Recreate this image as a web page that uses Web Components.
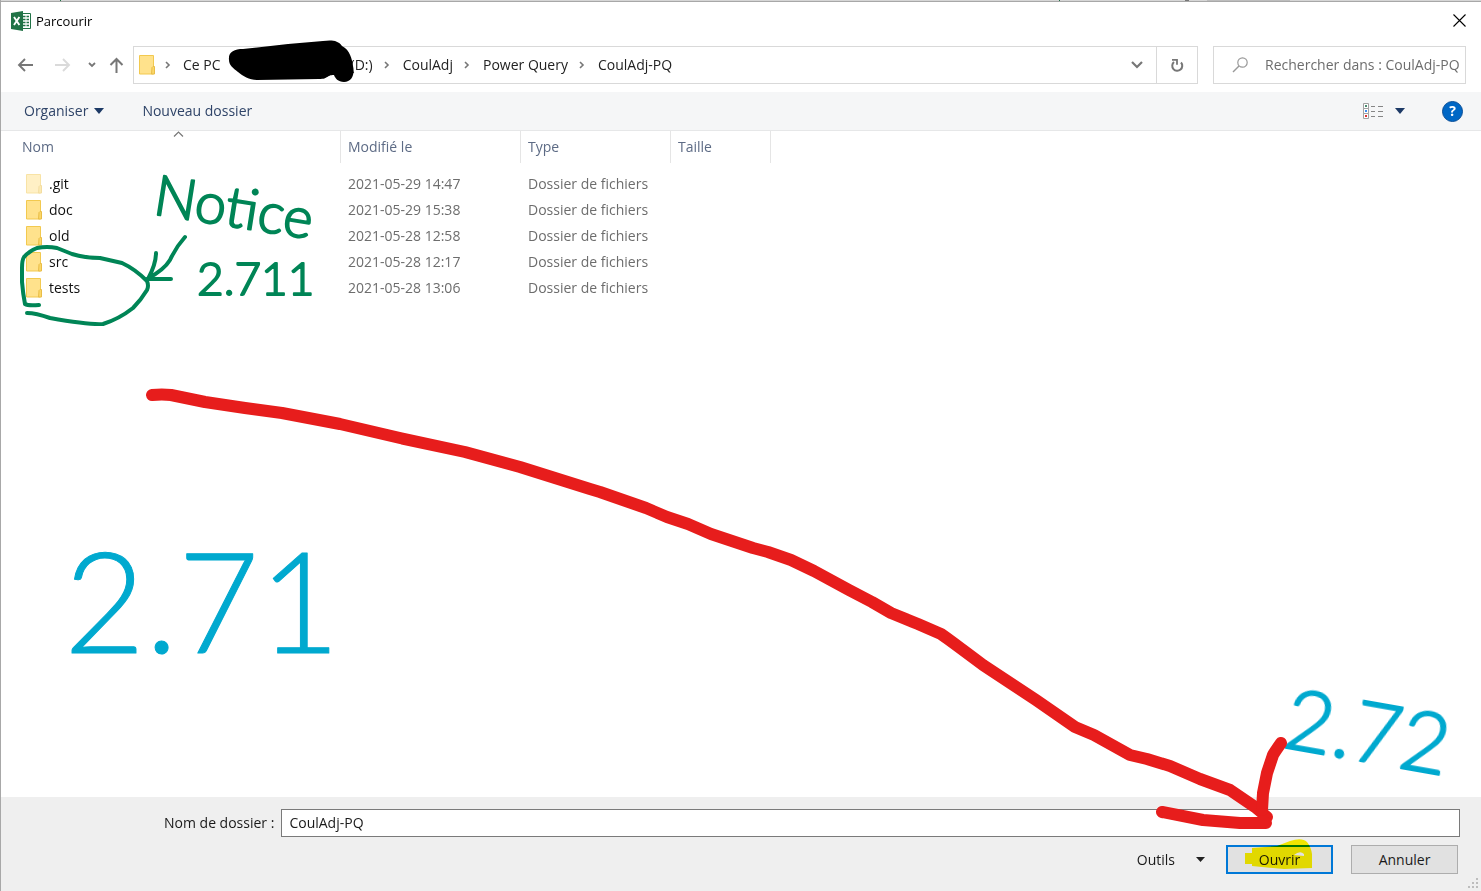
<!DOCTYPE html>
<html lang="fr">
<head>
<meta charset="utf-8">
<title>Parcourir</title>
<style>
  body { margin: 0; background: #fff; color: #1a1a1a; font: 14px/20px "Open Sans", "Noto Sans", sans-serif; }
</style>
</head>
<body>
<file-dialog>
  <title-bar>Parcourir</title-bar>
  <nav-bar></nav-bar>
  <command-bar></command-bar>
  <file-list></file-list>
  <dialog-footer></dialog-footer>
  <ink-layer slot="ink"></ink-layer>
</file-dialog>
<script>
const base = `<style>
  * { box-sizing: border-box; }
  button, input { font: inherit; color: inherit; margin: 0; }
  button { background: none; border: 0; padding: 0; display: flex; align-items: center; }
  svg { display: block; flex: none; }
</style>`;

function define(name, html) {
  customElements.define(name, class extends HTMLElement {
    constructor() {
      super();
      this.attachShadow({ mode: 'open' }).innerHTML = base + html;
    }
  });
}

define('file-dialog', `
<style>
  :host { display: flex; flex-direction: column; min-height: 100vh; position: relative; overflow: hidden; box-sizing: border-box;
    border-left: 1px solid #a8a8a8; background: #fff; }
  .edge { height: 2px; border-bottom: 1px solid #a8a8a8;
    background: linear-gradient(90deg, #d6d6d6 59px, #217346 59px 60px, #d6d6d6 60px 1058px, #217346 1058px 1059px, #d6d6d6 1059px 1184px, #777 1184px 1188px, #d6d6d6 1188px 1206px, #bdbdbd 1206px 1289px, #d6d6d6 1289px); }
</style>
<div class="edge"></div>
<slot></slot>
<slot name="ink"></slot>`);

define('title-bar', `
<style>
  :host { display: flex; align-items: center; gap: 5px; height: 37px; padding: 0 15px 0 10px; font-size: 13px; color: #000; box-sizing: border-box; }
  button { margin-left: auto; }
</style>
<svg width="20" height="20" viewBox="0 0 20 20">
  <path fill="#fff" stroke="#217346" d="M10 2.5h9.500v15H10z"/>
  <path stroke="#217346" stroke-width="1.4" d="M12 5.5h6M12 8.5h6M12 11.5h6M12 14.5h6"/>
  <path stroke="#fff" stroke-width="1" d="M15 4v12"/>
  <path fill="#217346" d="M0 2 12 0v20L0 18z"/>
  <path stroke="#fff" stroke-width="1.9" d="m3 6 5.400 8M8.400 6 3 14"/>
</svg>
<slot></slot>
<button aria-label="Fermer"><svg width="13" height="13" viewBox="0 0 13 13"><path stroke="#000" stroke-width="1.100" d="m.5.5 12 12m0-12-12 12"/></svg></button>`);

define('folder-icon', `
<style>
  :host { display: block; }
  :host([faded]) { opacity: .5; }
</style>
<svg width="17" height="20" viewBox="0 0 17 20">
  <path fill="#ffe28c" stroke="#f2c94f" d="M.5.5h14v18.500H.5z"/>
  <path fill="#fbd768" stroke="#e9bd48" d="M13 12.500l1-1h1.500v7.500h-3z"/>
</svg>`);

define('crumb-sep', `
<style>:host { display: block; }</style>
<svg width="6" height="8" viewBox="0 0 6 8"><path fill="none" stroke="#777" stroke-width="1.6" d="m1 1 3 3-3 3"/></svg>`);

define('nav-bar', `
<style>
  :host { display: flex; align-items: center; height: 53px; padding: 0 15px 1px 16px; color: #222; box-sizing: border-box; }
  .back { margin-right: 21px; } .fwd { margin-right: 17px; } .recent { margin-right: 13px; } .up { margin-right: 9px; }
  .address { flex: 1; min-width: 0; height: 38px; display: flex; align-items: center; border: 1px solid #d9d9d9; margin-right: 15px; padding-left: 5px; }
  crumb-sep { margin: 0 13px 0 11px; }
  .first { margin: 0 12px 0 9px; }
  .redacted { margin: 0 -3px 0 7px; z-index: 1; }
  .drop { margin-left: auto; margin-right: 13px; }
  .refresh { align-self: stretch; width: 41px; justify-content: center; border-left: 1px solid #d9d9d9; }
  .search { width: 253px; height: 38px; display: flex; align-items: center; gap: 16px; border: 1px solid #d9d9d9; padding-left: 18px; }
  input { flex: 1; min-width: 0; border: 0; padding: 0; background: none; outline: 0; }
  input::placeholder { color: #6d6d6d; opacity: 1; }
</style>
<button class="back" aria-label="Précédent"><svg width="17" height="16" viewBox="0 0 17 16"><path fill="none" stroke="#777" stroke-width="1.9" d="M16 8H2m6-6L2 8l6 6"/></svg></button>
<button class="fwd" aria-label="Suivant"><svg width="16" height="16" viewBox="0 0 16 16"><path fill="none" stroke="#dadada" stroke-width="1.9" d="M0 8h14M8 2l6 6-6 6"/></svg></button>
<button class="recent" aria-label="Emplacements récents"><svg width="8" height="6" viewBox="0 0 8 6"><path fill="none" stroke="#777" stroke-width="1.8" d="m1 1 3 3 3-3"/></svg></button>
<button class="up" aria-label="Dossier parent"><svg width="15" height="16" viewBox="0 0 15 16"><path fill="none" stroke="#777" stroke-width="2" d="M7.500 16V2m-6 6 6-6 6 6"/></svg></button>
<nav class="address" aria-label="Adresse">
  <folder-icon></folder-icon>
  <crumb-sep class="first"></crumb-sep>
  <button>Ce PC</button>
  <svg class="redacted" width="126" height="50" viewBox="228 40 126 50" aria-hidden="true"><path d="M229 60c-1-8 5-11 14-11l45-5 35-3c8-1 15-1 19 5 8 4 10 13 11 20 2 8-1 16-9 16-6 0-9-4-10-7-8 0-5 4-15 4l-62 1c-8 0-14-4-19-8-5-4-9-7-9-12z"/></svg>
  <button>(D:)</button>
  <crumb-sep></crumb-sep>
  <button>CoulAdj</button>
  <crumb-sep></crumb-sep>
  <button>Power Query</button>
  <crumb-sep></crumb-sep>
  <button>CoulAdj-PQ</button>
  <button class="drop" aria-label="Historique"><svg width="12" height="8" viewBox="0 0 12 8"><path fill="none" stroke="#777" stroke-width="2.200" d="m1 1 5 5 5-5"/></svg></button>
  <button class="refresh" aria-label="Actualiser"><svg width="14" height="15" viewBox="0 0 14 15"><path fill="none" stroke="#777" stroke-width="2" d="M11 4.500A5 5 0 1 1 4 4"/><path fill="none" stroke="#777" stroke-width="1.800" d="M2 1.800h5v5"/></svg></button>
</nav>
<label class="search">
  <svg width="17" height="16" viewBox="0 0 17 16"><circle cx="10.500" cy="5.500" r="4.700" fill="none" stroke="#999" stroke-width="1.200"/><path stroke="#999" stroke-width="1.500" d="m7 9-6 6"/></svg>
  <input type="text" aria-label="Rechercher" placeholder="Rechercher dans : CoulAdj-PQ">
</label>`);

define('command-bar', `
<style>
  :host { display: flex; align-items: center; height: 39px; padding: 0 18px 0 23px; background: #f5f6f7; border-bottom: 1px solid #e6e7e8; color: #2f4468; box-sizing: border-box; }
  button { gap: 6px; }
  .new { margin-left: 38px; }
  .view { margin-left: auto; gap: 12px; margin-right: 37px; }
</style>
<button>Organiser <svg width="10" height="6" viewBox="0 0 10 6"><path fill="#1d3a66" d="M0 0h10L5 6z"/></svg></button>
<button class="new">Nouveau dossier</button>
<button class="view" aria-label="Affichage">
  <svg width="21" height="17" viewBox="0 0 21 17">
    <path fill="#fff" stroke="#a2a2a2" d="M1.500.5h5v5h-5zM1.500 5.500h5v5h-5zM1.500 10.500h5v5h-5z"/>
    <path fill="#4a8b70" d="M3 2h2v2H3z"/><path fill="#3d8cf0" d="M3 7h2v2H3z"/><path fill="#d33" d="M3 12h2v2H3z"/>
    <path stroke="#858585" d="M9 3.500h4m3 0h5M9 8.500h4m3 0h5M9 13.500h4m3 0h5"/>
  </svg>
  <svg width="10" height="6" viewBox="0 0 10 6"><path fill="#1d3a66" d="M0 0h10L5 6z"/></svg>
</button>
<help-button></help-button>`);

define('help-button', `
<style>
  :host { display: block; }
  button { width: 21px; height: 21px; border-radius: 50%; background: #0067c5; border: 1px solid #0a4f98; color: #fff; font-weight: 700; justify-content: center; }
</style>
<button aria-label="Aide">?</button>`);

const files = [
  ['.git', '2021-05-29 14:47'],
  ['doc', '2021-05-29 15:38'],
  ['old', '2021-05-28 12:58'],
  ['src', '2021-05-28 12:17'],
  ['tests', '2021-05-28 13:06']
];

define('file-list', `
<style>
  :host { display: block; flex: 1; }
  table { border-collapse: separate; border-spacing: 0; table-layout: fixed; width: 770px; color: #6d6d6d; }
  .name { width: 340px; } .date { width: 180px; } .type { width: 150px; } .size { width: 100px; }
  th { position: relative; height: 32px; padding: 0 0 0 7px; text-align: left; font-weight: 400; color: #5d6b85; border-right: 1px solid #e5e5e5; }
  th:first-child { padding-left: 21px; }
  th svg { position: absolute; top: 0; left: calc(50% + 2px); }
  tbody::before { content: ""; display: block; height: 8px; }
  td { height: 26px; padding: 0 0 0 7px; }
  td:first-child { padding-left: 25px; color: #111; }
  .file { display: flex; align-items: center; gap: 6px; }
</style>
<table>
  <colgroup><col class="name"><col class="date"><col class="type"><col class="size"></colgroup>
  <thead><tr>
    <th>Nom<svg width="11" height="6" viewBox="0 0 11 6"><path fill="none" stroke="#777" stroke-width="1.200" d="m1 5.500 4.500-4.500L10 5.500"/></svg></th>
    <th>Modifié le</th><th>Type</th><th>Taille</th>
  </tr></thead>
  <tbody>${files.map(([n, d], i) => `<tr><td><div class="file"><folder-icon${i ? '' : ' faded'}></folder-icon>${n}</div></td><td>${d}</td><td>Dossier de fichiers</td><td></td></tr>`).join('')}</tbody>
</table>`);

define('dialog-footer', `
<style>
  :host { display: flex; flex-direction: column; gap: 8px; height: 94px; padding: 12px 21px 0 163px; background: #efefef; box-sizing: border-box; position: relative; }
  .row { display: flex; align-items: center; gap: 7px; }
  input { flex: 1; min-width: 0; height: 28px; border: 1px solid #7a7a7a; background: #fff; padding: 0 7px 2px; outline: 0; }
  .actions { justify-content: flex-end; gap: 18px; padding-right: 2px; }
  .tools { gap: 21px; margin-right: 3px; }
  .action { width: 107px; height: 29px; justify-content: center; background: #e1e1e1; border: 1px solid #adadad; position: relative; }
  .primary { border: 2px solid #0078d7; }
  .marker { position: absolute; left: 17px; top: -8px; mix-blend-mode: multiply; }
  .grip { position: absolute; right: 2px; bottom: 2px; }
</style>
<div class="row"><label for="folder">Nom de dossier :</label><input id="folder" type="text" value="CoulAdj-PQ"></div>
<div class="row actions">
  <button class="tools">Outils <svg width="9" height="5" viewBox="0 0 9 5"><path fill="#222" d="M0 0h9L4.500 5z"/></svg></button>
  <button class="action primary">Ouvrir<svg class="marker" width="68" height="30" viewBox="0 0 68 30"><path fill="#fff500" fill-rule="evenodd" d="M0 14h7V9l25-2 13-5q12-4 17 1 4 5 5 12v14l-28 1-32-3v-2H0zm49 2q6-5 10-1v2z"/></svg></button>
  <button class="action">Annuler</button>
</div>
<svg class="grip" width="11" height="11" viewBox="0 0 11 11"><path fill="#bdbdbd" d="M8 0h2v2H8zM4 4h2v2H4zM8 4h2v2H8zM0 8h2v2H0zM4 8h2v2H4zM8 8h2v2H8z"/></svg>`);

define('ink-layer', `
<style>
  :host { position: absolute; inset: 0 0 0 -1px; pointer-events: none; }
  svg { width: 100%; height: 100%; }
  path { fill: none; stroke-linecap: round; stroke-linejoin: round; }
  text { font-family: Lato, "Open Sans", sans-serif; font-weight: 300; stroke-linejoin: round; }
  .green { stroke: #008556; } text.green { fill: #008556; }
  .blue { stroke: #00a9cf; fill: #00a9cf; }
  .red { stroke: #e71d1c; stroke-width: 12px; }
</style>
<svg viewBox="0 0 1481 891">
  <g stroke-width="4">
    <path class="green" d="M39 305q-11 1-14-1-2-10-3-22v-14q0-8 2-11 5-6 13-9 10-2 20 0l15 6q13 4 28 4l22 5q13 6 25 18 2 5 0 9-6 10-14 18-14 11-30 16-14 1-53-6-14-5-23-5"/>
    <path class="green" d="M185 237q-9 10-15 23-6 10-23 19M156 253q0 11-8 26h23"/>
  </g>
  <text class="green" stroke-width="2" font-size="56" transform="translate(152 214) rotate(9)">Notice</text>
  <text class="green" stroke-width="2" font-size="46" x="197" y="295">2.711</text>
  <text class="blue" stroke-width="1" font-size="140" x="64" y="653">2.71</text>
  <text class="blue" stroke-width="2" font-size="84" transform="translate(1281 747) rotate(10)">2.72</text>
  <path class="red" d="M152 395q10-1 19 0l34 7 40 6 37 5 58 11 60 14 65 14 55 15 70 22 10 3 46 16 21 9 21 7 23 10 42 14 15 4 23 8 23 11 35 19 23 12 19 11 27 11 23 10q10 7 42 31l53 35 39 27 19 8 36 20 17 4 23 7 30 13 30 11 25 17 12 10"/>
  <path class="red" d="M1281 743q-7 10-8 12l-6 18-4 20-1 17M1162 812l41 8 37 3h26"/>
</svg>`);
</script>
</body>
</html>
